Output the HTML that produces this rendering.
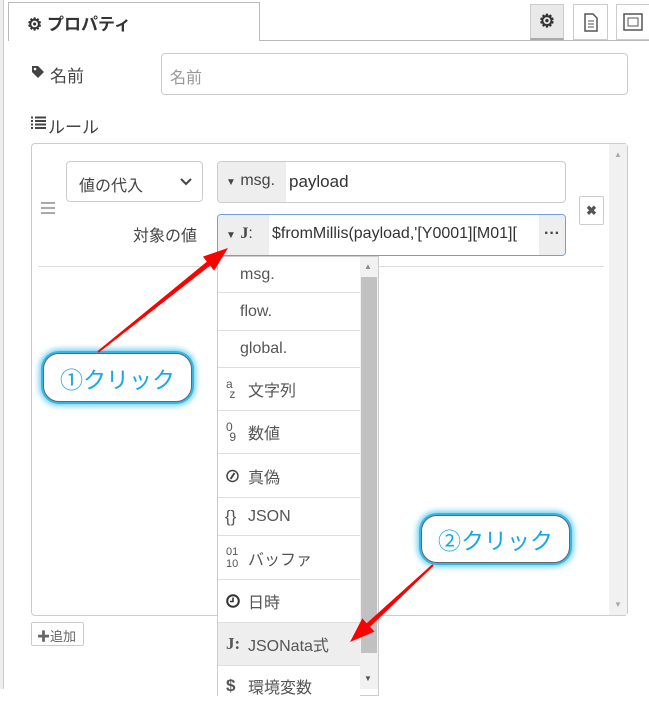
<!DOCTYPE html>
<html><head><meta charset="utf-8"><style>
*{box-sizing:border-box;margin:0;padding:0}
body{width:649px;height:689px;overflow:hidden;background:#fff;font-family:"Liberation Sans","Noto Sans CJK JP",sans-serif;color:#555;position:relative}
.a{position:absolute}
.tab{left:8px;top:2px;width:252px;height:39px;border:1px solid #bbb;border-bottom:none;background:#fff;font-size:17px;font-weight:bold;color:#333;padding:7px 0 0 18px}
.btn{top:4px;height:36px;border:1px solid #ccc;background:#fff}
.inp{border:1px solid #ccc;border-radius:4px;background:#fff}
.item{left:218px;width:142px;border-bottom:1px solid #ddd;font-size:16px;color:#555;display:flex;align-items:center;padding-left:22px;background:#fff}
.ic{position:absolute;left:8px;top:50%;transform:translateY(-50%);font-size:12px;color:#555}
.call{border:1px solid #666;border-radius:16px;background:#fff;box-shadow:0 0 0 2px #35b7e6,0 0 6px 4px #6fd0f3;color:#17a9e1;font-size:23px;display:flex;align-items:center;justify-content:center}
</style></head><body>
<div class="a" style="left:0;top:0;width:4px;height:689px;background:#eee;border-right:1px solid #ccc"></div>
<div class="a" style="left:8px;top:40px;width:641px;height:1px;background:#bbb"></div>
<div class="a tab">⚙ プロパティ</div>
<div class="a btn" style="left:530px;width:34px;background:#e9e9e9;border-bottom:2px solid #aaa;font-size:18px;text-align:center;line-height:33px;color:#333;font-weight:bold">⚙</div>
<div class="a btn" style="left:573px;width:35px"><svg width="33" height="34"><path d="M11 9h8l4 4v13h-12z" fill="none" stroke="#555" stroke-width="1.5"/><path d="M14 16h6M14 19h6M14 22h6" stroke="#555"/></svg></div>
<div class="a btn" style="left:616px;width:36px"><svg width="34" height="34"><rect x="7" y="9" width="18" height="16" fill="none" stroke="#555" stroke-width="1.5"/><rect x="11" y="13" width="10" height="8" fill="none" stroke="#555"/></svg></div>
<svg class="a" style="left:31px;top:65px" width="14" height="14"><path d="M1 1h6l6 6-6 6-6-6z" fill="#444"/><circle cx="4" cy="4" r="1.3" fill="#fff"/></svg>
<div class="a" style="left:50px;top:62px;font-size:17px;color:#444">名前</div>
<div class="a inp" style="left:161px;top:53px;width:467px;height:42px;font-size:16px;color:#999;padding:10px 0 0 8px">名前</div>
<svg class="a" style="left:31px;top:116px" width="15" height="13"><path d="M0 1.5h2M4 1.5h11M0 5h2M4 5h11M0 8.5h2M4 8.5h11M0 12h2M4 12h11" stroke="#444" stroke-width="2"/></svg>
<div class="a" style="left:48px;top:113px;font-size:17px;color:#444">ルール</div>
<div class="a" style="left:31px;top:143px;width:597px;height:473px;border:1px solid #ccc;border-radius:4px"></div>
<div class="a" style="left:609px;top:144px;width:18px;height:471px;background:#f1f1f1"></div>
<div class="a" style="left:614px;top:150px;font-size:8px;color:#aaa">▲</div>
<div class="a" style="left:614px;top:600px;font-size:8px;color:#aaa">▼</div>
<div class="a" style="left:41px;top:202px;width:14px"><div style="height:2px;background:#aaa;margin-bottom:3px"></div><div style="height:2px;background:#aaa;margin-bottom:3px"></div><div style="height:2px;background:#aaa"></div></div>
<div class="a inp" style="left:66px;top:161px;width:137px;height:41px;font-size:16px;color:#444;padding:10px 0 0 12px">値の代入<svg style="position:absolute;right:10px;top:16px" width="12" height="8"><path d="M1 1l5 5 5-5" fill="none" stroke="#444" stroke-width="2"/></svg></div>
<div class="a inp" style="left:217px;top:161px;width:349px;height:42px;overflow:hidden"><div style="position:absolute;left:0;top:0;width:68px;height:42px;background:#eee;font-size:16px;color:#444;padding:10px 0 0 8px"><span style="font-size:10px">▼</span> msg.</div><div style="position:absolute;left:71px;top:10px;font-size:17px;color:#333">payload</div></div>
<div class="a" style="left:579px;top:196px;width:25px;height:29px;border:1px solid #ccc;border-radius:2px;font-size:13px;font-weight:bold;text-align:center;line-height:27px;color:#555">✖</div>
<div class="a" style="left:133px;top:222px;font-size:16px;color:#444">対象の値</div>
<div class="a inp" style="left:217px;top:214px;width:349px;height:42px;border-color:#6ea0e0;overflow:hidden"><div style="position:absolute;left:0;top:0;width:51px;height:42px;background:#eee;font-size:16px;color:#444;padding:10px 0 0 8px"><span style="font-size:10px">▼</span> <b style="font-family:'Liberation Serif',serif">J</b>:</div><div style="position:absolute;left:54px;top:10px;font-size:16px;color:#333;white-space:nowrap">$fromMillis(payload,'[Y0001][M01][</div><div style="position:absolute;right:0;top:0;width:26px;height:42px;background:#eee;text-align:center;font-weight:bold;line-height:38px;color:#444">···</div></div>
<div class="a" style="left:38px;top:266px;width:566px;height:1px;background:#ddd"></div>
<div class="a" style="left:31px;top:622px;width:53px;height:24px;border:1px solid #ccc;border-radius:2px;font-size:13px;color:#666;padding:3px 0 0 5px"><b>✚</b>追加</div>
<div class="a" style="left:217px;top:256px;width:162px;height:440px;border:1px solid #ccc;background:#fff"></div>
<div class="a" style="left:360px;top:257px;width:18px;height:432px;background:#f1f1f1"></div>
<div class="a" style="left:361px;top:277px;width:16px;height:376px;background:#c1c1c1"></div>
<div class="a" style="left:364px;top:262px;font-size:8px;color:#888">▲</div>
<div class="a" style="left:364px;top:674px;font-size:8px;color:#555">▼</div>
<div class="a item" style="top:257px;height:36px">msg.</div>
<div class="a item" style="top:293px;height:38px">flow.</div>
<div class="a item" style="top:331px;height:37px">global.</div>
<div class="a item" style="top:368px;height:43px;padding-left:30px"><span class="ic" style="line-height:10px">a<br>&nbsp;z</span>文字列</div>
<div class="a item" style="top:411px;height:43px;padding-left:30px"><span class="ic" style="line-height:10px">0<br>&nbsp;9</span>数値</div>
<div class="a item" style="top:454px;height:44px;padding-left:30px"><svg class="ic" width="13" height="13"><circle cx="6.5" cy="6.5" r="5.5" fill="none" stroke="#444" stroke-width="1.5"/><path d="M8.5 3.5l-4 6" stroke="#444" stroke-width="2"/></svg>真偽</div>
<div class="a item" style="top:498px;height:38px;padding-left:30px"><span class="ic" style="font-size:17px;left:7px">{}</span>JSON</div>
<div class="a item" style="top:536px;height:44px;padding-left:30px"><span class="ic" style="line-height:12px;font-size:11px">01<br>10</span>バッファ</div>
<div class="a item" style="top:580px;height:43px;padding-left:30px"><svg class="ic" width="14" height="14"><circle cx="7" cy="7" r="5.8" fill="none" stroke="#333" stroke-width="2"/><path d="M7 3.5v4h-3" fill="none" stroke="#333" stroke-width="1.6"/></svg>日時</div>
<div class="a item" style="top:623px;height:43px;padding-left:30px;background:#eee"><span class="ic" style="font-size:17px;font-family:'Liberation Serif',serif;font-weight:bold">J:</span>JSONata式</div>
<div class="a item" style="top:666px;height:40px;padding-left:30px;border:none"><span class="ic" style="font-size:17px;font-weight:bold">$</span>環境変数</div>
<div class="a call" style="left:43px;top:353px;width:149px;height:49px">①クリック</div>
<div class="a call" style="left:421px;top:515px;width:149px;height:48px">②クリック</div>
<svg class="a" style="left:0;top:0" width="649" height="689">
<polygon points="97.4,351.2 206.9,261.6 202.9,256.6 228,248 214.1,270.6 210.1,265.6 98.6,352.8" fill="#f00"/>
<polygon points="432.3,564.3 366.7,623.2 362.3,618.4 350,642 374.5,631.6 370.1,626.8 433.7,565.7" fill="#f00"/>
</svg>
</body></html>
